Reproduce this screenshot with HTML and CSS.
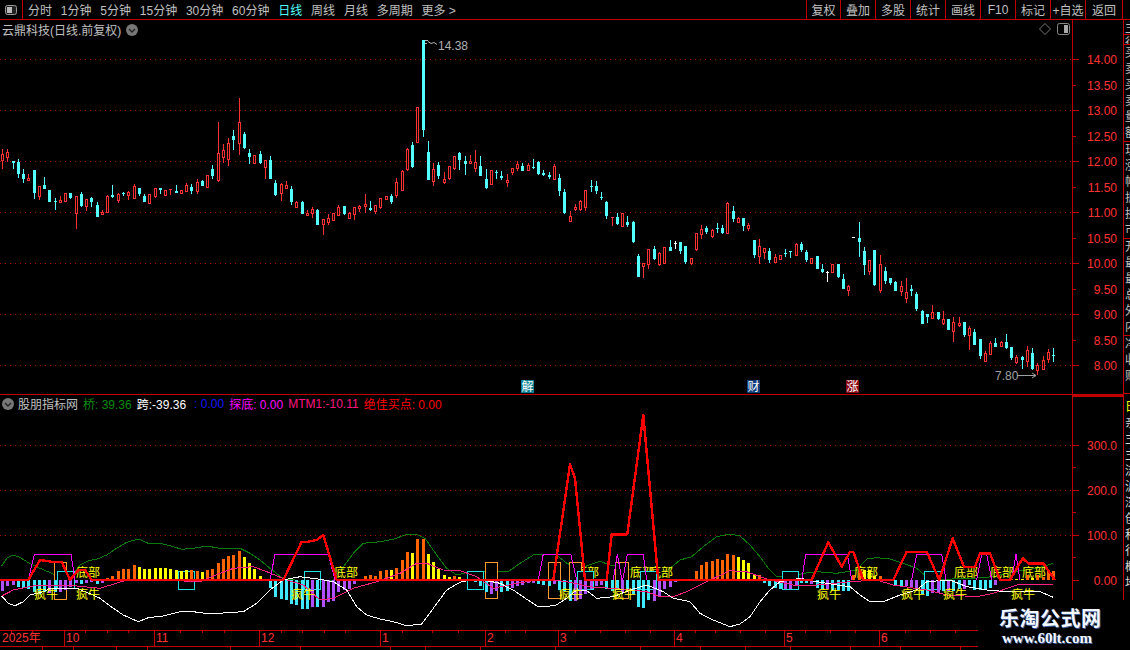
FILE: index.html
```html
<!DOCTYPE html>
<html lang="zh-CN">
<head>
    <meta charset="UTF-8">
    <meta name="viewport" content="width=device-width, initial-scale=1.0">
    <title>云鼎科技 日线</title>
    <link rel="stylesheet" href="styles.css">
</head>
<body>
    <div class="app">
        <div class="toolbar">
            <div class="panel-toggle">
                <svg width="14" height="12" viewBox="0 0 14 12"><rect x="1.5" y="1.5" width="11" height="9" rx="2" fill="#222" stroke="#999"/><rect x="3" y="3" width="5" height="6" fill="#bbb"/></svg>
            </div>
            <div class="tabs">
                <span>分时</span><span>1分钟</span><span>5分钟</span><span>15分钟</span><span>30分钟</span><span>60分钟</span>
                <span class="active">日线</span><span>周线</span><span>月线</span><span>多周期</span><span>更多 &gt;</span>
            </div>
            <div class="actions">
                <button class="first">复权</button><button>叠加</button><button>多股</button><button>统计</button><button>画线</button><button>F10</button><button>标记</button><button>+自选</button><button class="last">返回</button>
            </div>
        </div>

        <div class="workspace">
            <div class="charts">
                <div class="panel price-panel">
                    <div class="plot">
                        <svg id="priceChart" viewBox="0 20 1072 374" width="1072" height="374"></svg>
                        <div class="panel-title">
                            <span>云鼎科技(日线.前复权)</span>
                            <svg class="round-icon" width="12" height="12" viewBox="0 0 12 12"><circle cx="6" cy="6" r="6" fill="#777"/><path d="M3 5l3 3 3-3" fill="none" stroke="#222" stroke-width="1.4"/></svg>
                        </div>
                        <div class="plot-tools">
                            <svg width="12" height="12" viewBox="0 0 12 12"><path d="M6 .5L11.5 6 6 11.5.5 6z" fill="none" stroke="#777"/></svg>
                            <svg width="13" height="12" viewBox="0 0 13 12"><rect x=".5" y=".5" width="12" height="11" rx="2" fill="none" stroke="#888"/><rect x="7" y="2" width="4" height="8" fill="#aaa"/></svg>
                        </div>
                    </div>
                    <div class="axis"><svg id="priceAxis" viewBox="1073 20 50 374" width="50" height="374"></svg></div>
                </div>

                <div class="panel indicator-panel">
                    <div class="plot">
                        <svg id="indicatorChart" viewBox="0 395 1072 235" width="1072" height="235"></svg>
                        <div class="indicator-title">
                            <svg class="round-icon" width="12" height="12" viewBox="0 0 12 12"><circle cx="6" cy="6" r="6" fill="#777"/><path d="M3 5l3 3 3-3" fill="none" stroke="#222" stroke-width="1.4"/></svg>
                            <span class="name">股朋指标网</span>
                            <span class="green">桥: 39.36</span>
                            <span class="white">跨:-39.36</span>
                            <span class="blue">: 0.00</span>
                            <span class="magenta">探底: 0.00</span>
                            <span class="pink">MTM1:-10.11</span>
                            <span class="red">绝佳买点: 0.00</span>
                        </div>
                    </div>
                    <div class="axis"><svg id="indicatorAxis" viewBox="1073 395 50 235" width="50" height="235"></svg></div>
                </div>

                <div class="date-axis"><svg id="dateAxis" viewBox="0 630 1123 20" width="1123" height="20"></svg></div>
            </div>

            <div class="side">
                <div class="side-block h15"><p>主力</p></div>
                <div class="side-block h10"><p>行</p></div>
                <div class="side-block h97"><p>买</p><p>卖</p><p>买</p><p>卖</p><p>量</p><p>额</p></div>
                <div class="side-block h97"><p>现</p><p>涨</p><p>幅</p><p>振</p><p>换</p><p>市</p></div>
                <div class="side-block h97"><p>开</p><p>最</p><p>最</p><p>总</p><p>外</p><p>内</p></div>
                <div class="side-block h58"><p>净</p><p>收</p><p>财</p></div>
                <div class="side-block yellow-block"><p>日</p><p>亲</p><p>主</p><p>主</p><p>流</p><p>沪</p><p>深</p><p>创</p><p>科</p><p>行</p><p>概</p><p>地</p></div>
            </div>
        </div>

        <div class="watermark">
            <div class="wm-name">乐淘公式网</div>
            <div class="wm-url">www.60lt.com</div>
        </div>
    </div>

    <script src="chart.js"></script>
</body>
</html>
```

FILE: styles.css
```css
* {
    box-sizing: border-box;
}

body {
    margin: 0;
    padding: 0;
    background-color: #000;
    font-family: "Liberation Sans", "Noto Sans CJK SC", sans-serif;
    font-size: 12px;
    color: #c0c0c0;
}

svg {
    display: block;
}

.app {
    position: relative;
    width: 1130px;
    height: 650px;
    overflow: hidden;
    background-color: #000;
}

.toolbar {
    display: flex;
    height: 20px;
    border-bottom: 1px solid #c00000;
}

.panel-toggle {
    width: 23px;
    display: flex;
    align-items: center;
    justify-content: center;
    border-right: 1px solid #c00000;
}

.tabs {
    display: flex;
    align-items: center;
    gap: 8.8px;
    padding-left: 5px;
    flex: 1;
    white-space: nowrap;
}

.tabs .active {
    color: #54ffff;
}

.actions {
    display: flex;
    margin-right: 7px;
    border-right: 1px solid #c00000;
}

.actions button {
    width: 35px;
    height: 19px;
    padding: 0;
    background: none;
    border: none;
    border-left: 1px solid #c00000;
    color: #c0c0c0;
    font: inherit;
    white-space: nowrap;
}

.actions .first {
    width: 34px;
}

.actions .last {
    width: 37px;
}

.workspace {
    display: flex;
    height: 630px;
}

.charts {
    width: 1123px;
}

.panel {
    display: flex;
}

.price-panel {
    height: 375px;
    border-bottom: 1px solid #c00000;
}

.indicator-panel {
    height: 235px;
}

.plot {
    position: relative;
    width: 1072px;
}

.axis {
    width: 51px;
    border-left: 1px solid #c00000;
}

.indicator-panel .axis {
    box-shadow: inset 0 2px 0 #c00000;
}

.panel-title {
    position: absolute;
    top: 1px;
    left: 2px;
    display: flex;
    align-items: center;
    gap: 5px;
    height: 17px;
}

.plot-tools {
    position: absolute;
    top: 3px;
    right: 2px;
    display: flex;
    align-items: center;
    gap: 6px;
}

.indicator-title {
    position: absolute;
    top: 0;
    left: 2px;
    display: flex;
    align-items: center;
    height: 17px;
    gap: 5px;
    white-space: nowrap;
}

.indicator-title .name {
    margin-left: -1px;
}

.green {
    color: #0a8a0a;
}

.white {
    color: #fff;
}

.blue {
    margin-left: 3px;
    color: #1414ff;
}

.magenta {
    color: #ff00ff;
}

.pink {
    color: #ff1480;
}

.red {
    color: #ff0000;
}

.date-axis {
    height: 20px;
}

.side {
    width: 7px;
    height: 630px;
    overflow: hidden;
    border-left: 1px solid #c00000;
    line-height: 16px;
    white-space: nowrap;
}

.side p {
    margin: 0;
    padding-left: 1px;
}

.side-block {
    overflow: hidden;
    border-bottom: 1px solid #c00000;
}

.h15 {
    height: 15px;
}

.h10 {
    height: 10px;
}

.h97 {
    height: 97px;
}

.h58 {
    height: 58px;
}

.yellow-block {
    border-bottom: none;
    color: #d8d8d8;
    padding-top: 5px;
}

.yellow-block p:first-child {
    color: #ffff00;
}

.watermark {
    position: absolute;
    left: 978px;
    top: 600px;
    width: 152px;
    height: 50px;
    padding: 6px 0 0 21px;
    background-color: #000;
    color: #f4f8ff;
}

.wm-name {
    font-family: "Noto Sans CJK SC", sans-serif;
    font-size: 20px;
    font-weight: 700;
    line-height: 24px;
    letter-spacing: 0.5px;
    text-shadow: 1px 1px 0 #3a5a9a;
}

.wm-url {
    margin-left: 3px;
    font-family: "Liberation Serif", serif;
    font-size: 15px;
    font-weight: 700;
    line-height: 17px;
    text-shadow: 1px 1px 0 #3a5a9a;
}
```

FILE: chart.js
```js
// candles and lines are traced off the chart at 3x, so every set keeps its own origin
// candle row: x, type, wick top, body top, body bottom, wick bottom
const candleSets = [
    { x0: 0, y0: 90, rows: [
        [7,'r',178,192,210,237],[22,'r',178,186,201,216],[40,'c',213,213,219,237],[55,'c',207,216,252,264],
        [70,'c',237,252,267,279],[85,'r',252,264,270,273],[103,'c',240,240,309,327],[118,'r',288,288,318,330],
        [133,'c',261,285,297,297],[148,'c',300,300,336,336],[166,'c',324,333,336,360],[181,'r',318,330,336,336],
        [196,'r',309,309,333,333],[211,'c',309,309,324,327],[229,'r',318,318,369,417],[244,'c',306,312,348,351],
        [259,'r',327,327,348,363],[274,'c',321,324,336,351],[292,'c',336,345,381,381],[307,'r',360,366,372,372],
        [322,'r',315,318,366,366],[337,'c',285,315,321,324],[355,'r',309,312,330,339],[370,'c',306,309,312,318],
        [385,'r',303,306,315,330],[403,'r',282,288,324,324],[418,'c',294,294,312,318],[433,'c',312,318,336,336],
        [448,'r',312,312,339,339],[466,'r',294,294,318,324],[481,'c',294,294,300,312],[496,'r',300,300,315,318],
        [511,'r',297,297,300,315],[529,'c',285,303,309,309],[544,'r',300,300,309,312],[559,'r',279,285,303,306],
        [574,'c',282,291,303,312],[592,'r',267,276,303,312],[607,'c',270,273,288,288],[622,'r',255,255,291,291],
        [637,'c',225,237,258,267],[655,'r',96,189,270,276],[670,'r',162,180,201,219],[685,'r',144,159,207,228],
        [700,'c',120,138,150,180],[718,'r',24,96,159,195],[733,'c',126,132,175,178],[748,'c',177,189,201,222],
        [763,'r',195,195,219,219],[781,'c',183,192,219,222],[796,'r',210,210,231,267],[811,'c',198,210,267,267],
        [826,'c',270,279,315,318],[844,'r',279,282,309,333],[859,'r',273,285,294,294],[874,'c',288,297,336,345],
        [889,'r',333,336,351,351],[907,'c',333,336,372,372],[922,'r',360,369,375,375],[937,'r',351,357,369,384],
        [952,'c',357,360,405,405],[970,'r',387,387,402,435],[985,'r',372,384,396,405],[1000,'r',369,369,390,390],
        [1015,'r',345,351,375,375],[1033,'c',348,348,372,375],[1048,'r',366,369,384,384],[1063,'r',351,351,372,390],
        [1078,'r',345,348,354,366],[1096,'r',312,342,348,369],[1111,'c',333,354,360,363],[1126,'r',345,345,363,372],
        [1141,'r',324,324,351,357],[1159,'r',318,318,327,330],[1174,'c',312,318,336,342],[1189,'r',264,276,315,324]
    ]},
    { x0: 400, y0: 130, rows: [
        [7,'r',120,123,180,180],[22,'r',54,57,117,123],[37,'c',36,45,111,114],[52,'r',-69,-69,35,35],
        [70,'c',-270,-270,0,21],[85,'c',33,66,150,150],[100,'r',99,117,153,168],[115,'c',96,105,138,147],
        [133,'r',126,147,156,162],[148,'r',108,108,144,150],[163,'r',78,78,114,120],[178,'c',66,69,90,120],
        [196,'c',78,93,102,135],[211,'r',75,93,99,102],[226,'r',60,96,114,126],[241,'c',78,108,138,138],
        [259,'c',117,147,174,177],[274,'r',120,120,162,165],[289,'c',120,126,129,147],[304,'c',123,138,144,150],
        [322,'r',132,150,156,171],[337,'r',114,114,126,135],[352,'r',93,102,114,123],[367,'c',99,108,123,123],
        [385,'r',99,105,120,120],[400,'c',87,111,114,117],[415,'c',93,96,132,135],[430,'c',120,129,135,138],
        [448,'c',126,135,141,147],[463,'r',102,108,147,147],[478,'c',132,144,183,198],[493,'c',177,186,249,252],
        [511,'r',243,258,273,276],[526,'r',222,231,237,243],[541,'r',210,213,237,243],[556,'r',180,180,231,243],
        [574,'c',150,168,171,186],[589,'c',153,168,183,192],[604,'c',186,201,204,210],[619,'c',213,216,258,267],
        [637,'r',261,261,264,288],[652,'c',249,261,282,285],[667,'r',249,249,288,288],[682,'c',258,276,285,291],
        [700,'c',273,276,336,339],[715,'c',372,378,441,441],[730,'r',399,399,408,444],[745,'r',357,357,402,417],
        [763,'c',348,357,387,390],[778,'r',366,369,402,408],[793,'r',351,351,399,399],[811,'c',330,351,363,363],
        [826,'w',333,339,339,357],[841,'c',336,336,363,372],[856,'c',348,348,396,402],[874,'r',384,384,399,405],
        [889,'r',309,309,357,363],[904,'r',285,297,312,327],[919,'c',288,294,306,312],[937,'r',297,300,318,324],
        [952,'c',279,294,297,309],[967,'c',285,294,309,312],[982,'r',216,219,309,312],[1000,'c',228,243,267,276],
        [1015,'r',261,264,276,279],[1030,'c',264,264,288,303],[1045,'r',279,285,294,303],[1063,'c',330,330,375,384]
    ]},
    { x0: 740, y0: 190, rows: [
        [58,'r',147,168,198,222],[73,'r',174,174,186,207],[88,'c',174,183,210,219],[106,'r',192,201,216,216],
        [121,'r',195,195,207,207],[136,'c',177,189,192,201],[151,'c',183,183,186,204],[169,'r',159,162,195,195],
        [184,'c',156,162,180,186],[199,'c',180,186,210,216],[214,'r',204,204,219,219],[232,'c',198,198,237,237],
        [247,'c',222,237,246,249],[262,'w',243,246,246,276],[277,'r',222,222,246,249],[295,'c',222,222,261,264],
        [310,'c',252,267,297,297],[325,'r',285,288,300,318],[340,'w',142,142,143,143],[358,'c',96,144,156,201],
        [373,'c',171,183,225,255],[388,'r',210,210,243,255],[403,'c',180,180,285,288],[421,'r',195,222,300,309],
        [436,'c',231,243,273,282],[451,'c',264,264,279,285],[466,'c',273,276,303,303],[484,'r',273,288,303,318],
        [499,'r',264,306,324,339],[514,'c',285,297,303,318],[529,'c',306,312,357,363],[547,'c',360,363,402,402],
        [562,'c',372,372,381,399],[577,'r',345,366,384,384],[595,'c',366,366,387,390],[610,'r',363,387,399,405],
        [625,'c',387,387,420,420],[640,'r',381,396,423,456],[658,'r',381,399,405,411],[673,'c',396,396,435,441],
        [688,'r',408,414,435,480],[703,'c',417,426,465,465],[721,'c',447,447,498,507],[736,'r',483,489,513,513],
        [751,'r',453,459,492,492],[766,'c',444,459,471,471],[784,'r',453,456,468,471],[799,'c',432,456,474,477],
        [814,'c',471,471,504,510],[829,'r',495,501,516,522],[847,'c',498,501,510,537],[862,'r',468,480,513,531],
        [877,'c',474,489,537,540],[892,'r',519,525,540,555],[910,'r',498,510,537,537],[925,'r',477,486,507,519],
        [940,'c',474,495,498,516]
    ]}
];

// one bar per candle: letter is the colour, number the height in px, c and p hang below zero
const barData = (
    'p11 p6 p5 c7 c8 c9 c12 c14 c12 p13 c12 p12 p10 p7 p3 c4 p3 p2 c4 p3 ' +
    'o2 o4 o9 o11 o11 o15 y13 y11 y11 y12 y12 y12 y11 y10 y9 y10 o10 o9 y8 o10 o11 o17 o21 o24 o25 o29 y23 y17 y11 y4 ' +
    'c1 c8 c17 c19 c20 c24 c25 c29 c29 p27 c27 p27 p22 p21 p12 p10 p9 p4 c1 o4 o5 o4 ' +
    'o9 o10 y10 o12 o20 o28 y27 o41 o41 y26 y18 y11 y5 y3 o4 y3 y1 c1 c2 c6 c12 p14 p11 c12 c11 p8 p6 p5 p3 p3 ' +
    'c4 c5 c6 p4 c10 c11 c21 p21 p19 p14 p9 p6 p5 c9 c11 c10 p12 c11 c14 c27 c28 c20 p21 p16 p9 p7 p2 y1 y1 o1 ' +
    'o9 o15 o18 o19 o21 o20 o26 o25 y23 y20 y17 y6 o5 ' +
    'c3 c6 c8 c9 p9 p9 p5 c3 c3 p4 c8 c9 p9 c10 c10 c11 c11 o5 o8 y10 y10 y4 o4 y1 o1 c6 c6 p6 p7 p9 c14 c16 p13 p13 ' +
    'c11 p11 c11 c9 p9 c5 c10 c10 c10 c8 p5 y1 y1 o1 y1 y1 o5 y2 o5 o3 o9 o9'
).split(' ');

const barColors = { o: '#ff6400', y: '#ffff00', p: '#b050ff', c: '#40e8ff' };
const candleColors = { r: '#ff3232', c: '#54ffff', w: '#ffffff' };

const ZERO_Y = 580;

function traced(x0, y0, pts) {
    const out = [];
    for (let i = 0; i < pts.length; i += 2) {
        out.push([x0 + pts[i] / 3, y0 + pts[i + 1] / 3]);
    }
    return out;
}

function polyline(points, color, width) {
    const d = points.map(p => p[0].toFixed(1) + ',' + p[1].toFixed(1)).join(' ');
    return '<polyline points="' + d + '" fill="none" stroke="' + color + '" stroke-width="' + width + '" stroke-linejoin="round"/>';
}

function rect(x, y, w, h, fill) {
    return '<rect x="' + x + '" y="' + y + '" width="' + w + '" height="' + h + '" fill="' + fill + '"/>';
}

function text(x, y, str, color, anchor, size) {
    return '<text x="' + x + '" y="' + y + '" fill="' + color + '" text-anchor="' + (anchor || 'start') + '" font-size="' + (size || 12) + '">' + str + '</text>';
}

function dotted(y, x2) {
    return '<line x1="0" y1="' + y + '" x2="' + x2 + '" y2="' + y + '" stroke="#b00000" stroke-dasharray="1 4"/>';
}

function tag(x, y, str, bg) {
    return rect(x, y, 13, 13, bg) + text(x + 0.5, y + 11, str, '#fff');
}

// candles
let candleX = [];

function drawCandles() {
    let s = '';
    candleSets.forEach(set => {
        set.rows.forEach(r => {
            const x = Math.floor(set.x0 + r[0] / 3);
            const wt = Math.round(set.y0 + r[2] / 3);
            const bt = Math.round(set.y0 + r[3] / 3);
            const bb = Math.round(set.y0 + r[4] / 3);
            const wb = Math.round(set.y0 + r[5] / 3);
            const color = candleColors[r[1]];
            candleX.push(x);
            s += rect(x, wt, 1, Math.max(wb - wt, 1), color);
            if (r[1] === 'r' && bb - bt > 1) {
                s += rect(x - 1, bt, 3, bb - bt + 1, color) + rect(x, bt + 1, 1, bb - bt - 1, '#000');
            } else {
                s += rect(x - 1, bt, 3, Math.max(bb - bt, 1), color);
            }
        });
    });
    return s;
}

function drawPriceChart() {
    let s = '';
    [59, 110, 161, 212, 263, 314, 365].forEach(y => { s += dotted(y + 0.5, 1072); });
    s += drawCandles();
    s += text(438, 50, '14.38', '#b0b0b0');
    s += '<path d="M425 40.5h3M425 43.5h2M428 41.5l3 2 3-1 3 2" fill="none" stroke="#b0b0b0"/>';
    s += text(995, 380, '7.80', '#a0a0a0');
    s += '<path d="M1017 375.5h19M1032 373l4 2.5-4 2.5" fill="none" stroke="#a0a0a0"/>';
    s += tag(521, 380, '解', '#0a7f92');
    s += tag(747, 380, '财', '#0c3d78');
    s += tag(846, 380, '涨', '#8a0a14');
    document.getElementById('priceChart').innerHTML = s;
}

function drawPriceAxis() {
    const labels = ['14.00', '13.50', '13.00', '12.50', '12.00', '11.50', '11.00', '10.50', '10.00', '9.50', '9.00', '8.50', '8.00'];
    let s = '';
    labels.forEach((label, i) => {
        const y = Math.round(59 + i * 25.5);
        s += rect(1073, y, i % 2 ? 3 : 6, 1, '#c00000');
        s += text(1117, y + 5, label, '#ff3232', 'end');
    });
    document.getElementById('priceAxis').innerHTML = s;
}

const greenLine = [].concat(
    traced(0, 520, [5,138,20,115,40,105,60,112,85,128,120,145,160,162,190,172,215,170,240,135,265,122,290,118,320,105,350,85,380,67,415,57,445,70,490,72,520,80,545,88,580,85,620,78,660,85,720,85,750,100,780,120,810,145,855,180,880,178,900,185,960,185,1000,180,1030,140,1060,100,1090,70,1140,65]),
    traced(380, 400, [40,418,80,403,110,403,135,415,170,465,200,505,230,525,270,515,310,515,350,515,385,515,420,490,460,465,490,462,530,465,560,490,600,505,660,484,690,495,720,500,760,510,800,520,840,535,870,505,900,480,935,470,970,440,1010,410,1050,402,1080,408,1110,435,1140,470]),
    traced(760, 535, [25,100,50,125,100,125,130,115,170,110,230,115,260,110,290,105,320,72,350,68,390,72,430,85,470,100,500,125,540,135,600,130,640,130,700,125,760,110,830,100,880,85])
);

const whiteLine = [].concat(
    traced(0, 520, [5,228,25,250,45,257,70,245,90,225,130,215,150,205,230,205,280,225,300,235,330,258,370,285,415,305,445,293,490,288,540,275,580,275,630,282,680,278,730,275,770,250,810,210,850,180,900,170,960,178,1000,185,1040,210,1070,260,1100,285,1140,297]),
    traced(380, 400, [40,665,80,677,125,672,160,625,200,570,240,547,270,540,310,540,360,550,400,570,440,598,475,620,525,617,560,595,590,570,620,572,650,595,700,590,750,570,800,555,850,575,880,595,930,605,960,640,1000,660,1050,680,1080,672,1110,650,1140,605]),
    traced(760, 535, [30,165,60,140,120,130,170,140,230,150,270,155,300,180,330,200,370,200,420,180,470,165,500,140,570,135,620,155,680,165,740,170,790,170,840,170,880,187])
);

const pinkLine = [].concat(
    traced(0, 520, [5,228,40,210,100,198,200,195,300,205,380,180,480,180,600,185,660,160,700,145,760,140,800,155,860,180,910,195,960,240,1000,235,1060,205,1130,185]),
    traced(380, 400, [60,520,110,490,140,490,190,510,240,512,290,530,340,565,400,552,470,540,520,540,560,545,640,562,700,565,800,575,840,590,880,590,920,575,980,545,1050,512,1100,515,1140,530]),
    traced(760, 535, [30,135,100,150,170,150,270,140,350,135,400,150,500,165,560,180,650,185,700,175,770,150,880,148])
);

const redLine = [].concat(
    traced(0, 520, [0,180,85,180,120,120,160,126,185,126,210,180,235,150,255,150,275,180,850,180,905,65,925,65,950,60,970,45,1010,180,1140,180]),
    traced(380, 400, [520,540,570,193,585,235,615,540,680,540,695,403,742,403,790,45,835,540,1140,540]),
    traced(760, 535, [155,135,205,22,245,95,270,50,280,50,310,135,400,135,440,50,500,50,538,135,578,10,612,95,645,95,660,55,690,55,720,135,750,135,788,70,805,85,850,85,885,135])
);

const magentaLines = [
    traced(0, 520, [85,180,103,103,213,103,225,180]),
    traced(0, 520, [810,180,825,103,985,103,1005,180]),
    traced(380, 400, [475,540,490,462,572,462,590,540]),
    traced(380, 400, [700,540,712,462,726,540]),
    traced(380, 400, [728,540,742,462,790,462,800,540]),
    traced(760, 535, [125,135,137,58,262,58,275,135]),
    traced(760, 535, [455,135,470,58,545,58,558,135]),
    traced(760, 535, [650,135,665,58,680,58,695,135]),
    traced(760, 535, [755,135,768,58,780,135])
];

// x, top, width, height
const orangeBoxes = [[54,562,12,37],[485,562,12,36],[548,562,12,36],[569,562,12,36],[615,562,13,36]];
const cyanBoxes = [[57,571,17,17],[178,571,16,18],[304,571,16,18],[467,571,16,18],[577,571,16,18],[640,571,16,18],[782,571,16,18],[924,571,16,18]];

const bottomLabels = [[76,573],[334,573],[575,573],[630,573],[649,573],[854,573],[954,573],[990,573],[1022,573]];
const bullLabels = [[34,595],[76,595],[291,595],[559,595],[612,595],[817,595],[901,595],[943,595],[1011,595]];

function box(b, color) {
    return '<rect x="' + (b[0] + 0.5) + '" y="' + (b[1] + 0.5) + '" width="' + b[2] + '" height="' + b[3] + '" fill="#000" stroke="' + color + '"/>';
}

function drawIndicator() {
    let s = '<g shape-rendering="crispEdges">';
    [445, 490, 535].forEach(y => { s += dotted(y + 0.5, 1072); });
    s += polyline(greenLine, '#0a7a0a', 1);
    bottomLabels.forEach(p => { s += text(p[0], p[1] + 4, '底部', '#ffff00'); });
    orangeBoxes.forEach(b => { s += box(b, '#ff9a30'); });
    cyanBoxes.forEach(b => { s += box(b, '#20e0e0'); });
    barData.forEach((bar, i) => {
        const kind = bar[0];
        const h = parseInt(bar.slice(1), 10);
        const y = (kind === 'c' || kind === 'p') ? ZERO_Y : ZERO_Y - h;
        s += rect(candleX[i] - 1, y, 3, h, barColors[kind]);
    });
    s += polyline(pinkLine, '#ff2080', 1);
    s += polyline(whiteLine, '#ffffff', 1);
    magentaLines.forEach(l => { s += polyline(l, '#ff00ff', 1); });
    s += polyline(redLine, '#ff0000', 2.4);
    s += '</g>';
    bullLabels.forEach(p => { s += text(p[0], p[1] + 4, '疯牛', '#ffff00'); });
    document.getElementById('indicatorChart').innerHTML = s;
}

function drawIndicatorAxis() {
    let s = '';
    [['300.0', 445], ['200.0', 490], ['100.0', 535], ['0.00', 580]].forEach(item => {
        s += rect(1073, item[1], 6, 1, '#c00000');
        if (item[1] < 580) {
            s += rect(1073, item[1] + 22, 3, 1, '#c00000');
        }
        s += text(1117, item[1] + 5, item[0], '#ff3232', 'end');
    });
    document.getElementById('indicatorAxis').innerHTML = s;
}

function drawDateAxis() {
    const months = [[64,'10'],[154,'11'],[259,'12'],[380,'1'],[485,'2'],[558,'3'],[674,'4'],[784,'5'],[879,'6']];
    const minor = [11,32,85,107,128,180,202,224,281,302,324,345,402,432,458,505,525,575,600,625,650,695,715,740,765,805,830,855,905,930,955];
    const lower = [42,73,116,147,230,300,390,425,480,555,640,700,745,790,850,900,960];
    let s = rect(0, 630, 978, 1, '#c00000') + rect(0, 646, 978, 1, '#c00000');
    months.forEach(m => {
        s += rect(m[0], 630, 1, 16, '#c00000');
        s += text(m[0] + 2, 642, m[1], '#ff3232');
    });
    s += text(2, 642, '2025年', '#ff3232');
    minor.forEach(x => { s += rect(x, 631, 1, 2, '#c00000'); });
    lower.forEach(x => { s += rect(x, 647, 1, 3, '#c00000'); });
    document.getElementById('dateAxis').innerHTML = s;
}

drawPriceChart();
drawPriceAxis();
drawIndicator();
drawIndicatorAxis();
drawDateAxis();
```
